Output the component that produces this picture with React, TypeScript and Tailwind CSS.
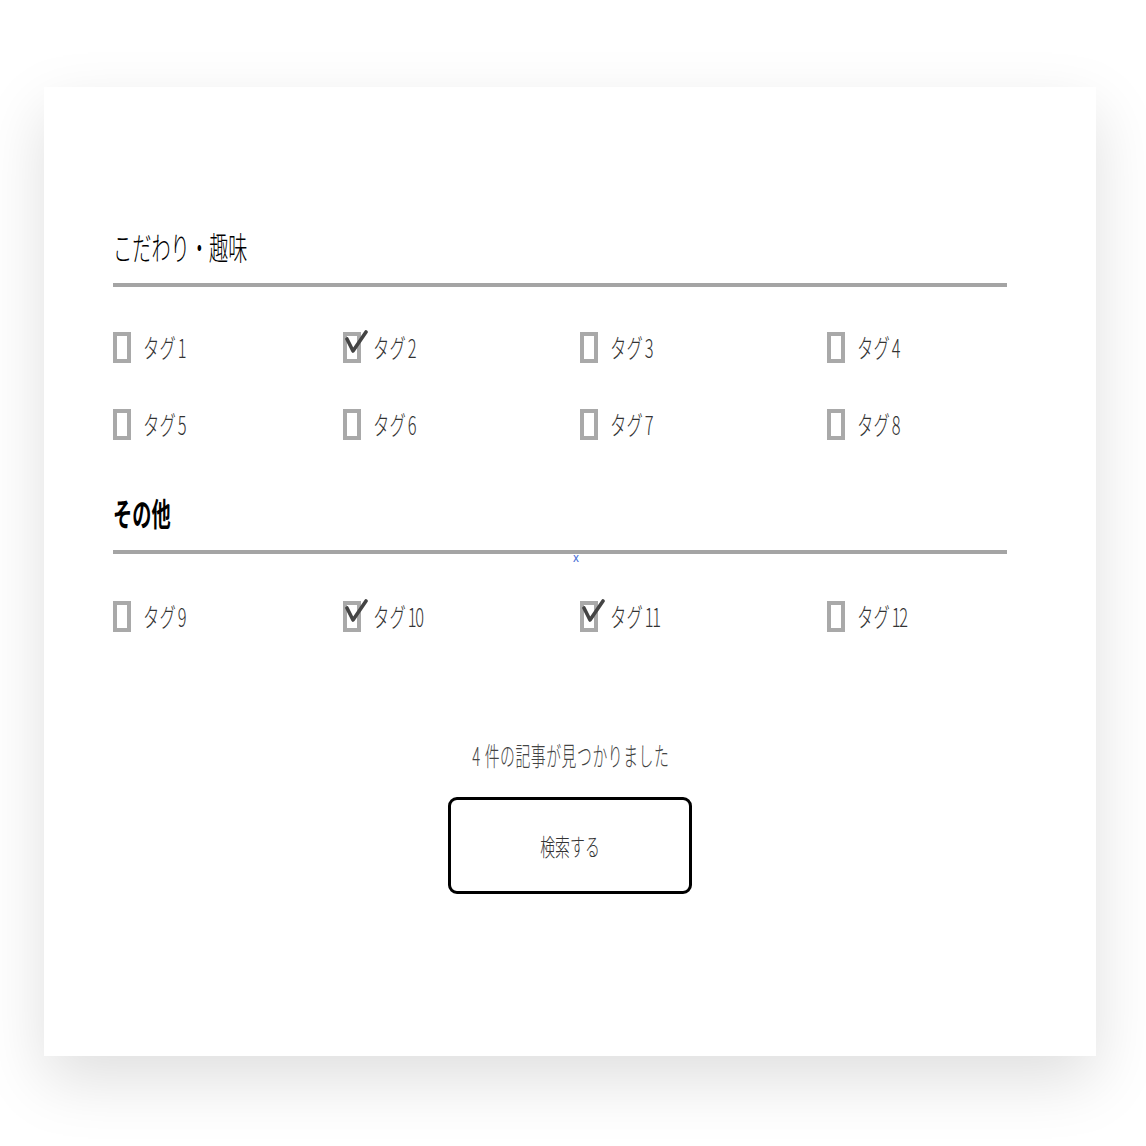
import React from "react";

const font = { fontFamily: '"Noto Sans CJK JP", "Noto Sans", sans-serif' };

type Tag = { num: string; checked: boolean };

const hobbyTags: Tag[] = [
  { num: "1", checked: false },
  { num: "2", checked: true },
  { num: "3", checked: false },
  { num: "4", checked: false },
  { num: "5", checked: false },
  { num: "6", checked: false },
  { num: "7", checked: false },
  { num: "8", checked: false },
];

const otherTags: Tag[] = [
  { num: "9", checked: false },
  { num: "10", checked: true },
  { num: "11", checked: true },
  { num: "12", checked: false },
];

const CheckItem = ({ tag }: { tag: Tag }) => (
  <label className="flex h-[40px] items-center">
    <span className="relative block h-[31px] w-[18px] shrink-0 border-[4px] border-[#a9a9a9] bg-white">
      {tag.checked && (
        <svg
          className="absolute left-[-4px] top-[-6px]"
          width="26"
          height="26"
          viewBox="0 0 26 26"
        >
          <path
            d="M4 9 L10 21 L23 2"
            fill="none"
            stroke="#444"
            strokeWidth="3.6"
            strokeLinecap="round"
            strokeLinejoin="round"
          />
        </svg>
      )}
    </span>
    <span className="ml-[12px] inline-block origin-left scale-x-[0.63] whitespace-nowrap text-[26px] font-light leading-[40px] text-[#333]">
      タグ<span className="ml-[3px] tracking-[-2px]">{tag.num}</span>
    </span>
  </label>
);

const Grid = ({ tags }: { tags: Tag[] }) => (
  <div className="grid grid-cols-[230px_237px_247px_1fr] gap-y-[37px]">
    {tags.map((t) => (
      <CheckItem key={t.num} tag={t} />
    ))}
  </div>
);

export default function App() {
  return (
    <div className="min-h-[1146px] bg-white pl-[44px] pr-[50px] pt-[87px]" style={font}>
      <div className="h-[969px] bg-white pl-[69px] pr-[89px] pt-[141px] shadow-[0_24px_60px_rgba(0,0,0,0.13)]">
        <h2 className="h-[36px]">
          <span className="inline-block origin-left scale-x-[0.6] whitespace-nowrap text-[32px] font-light leading-[36px] text-black">
            こだわり・趣味
          </span>
        </h2>
        <div className="mt-[19px] h-[4px] bg-[#a4a4a4]" />
        <div className="mt-[40px]">
          <Grid tags={hobbyTags} />
        </div>

        <h2 className="mt-[50px] h-[36px]">
          <span className="inline-block origin-left scale-x-[0.6] whitespace-nowrap text-[32px] font-bold leading-[36px] text-black">
            その他
          </span>
        </h2>
        <div className="relative mt-[20px] h-[4px] bg-[#a4a4a4]">
          <span className="absolute left-[460px] top-[1px] text-[12px] leading-[12px] text-[#4a6fd6]">
            x
          </span>
        </div>
        <div className="mt-[42px]">
          <Grid tags={otherTags} />
        </div>

        <div className="mt-[104px] flex justify-center pl-[22px]">
          <p className="inline-block scale-x-[0.57] whitespace-nowrap text-[26px] font-light leading-[30px] tracking-[1px] text-[#444]">
            4 件の記事が見つかりました
          </p>
        </div>
        <div className="mt-[27px] flex justify-center pl-[19px]">
          <button className="flex h-[97px] w-[244px] items-center justify-center rounded-[9px] border-[3px] border-black bg-white">
            <span className="inline-block scale-x-[0.62] whitespace-nowrap text-[24px] font-light leading-[30px] text-[#333]">
              検索する
            </span>
          </button>
        </div>
      </div>
    </div>
  );
}
